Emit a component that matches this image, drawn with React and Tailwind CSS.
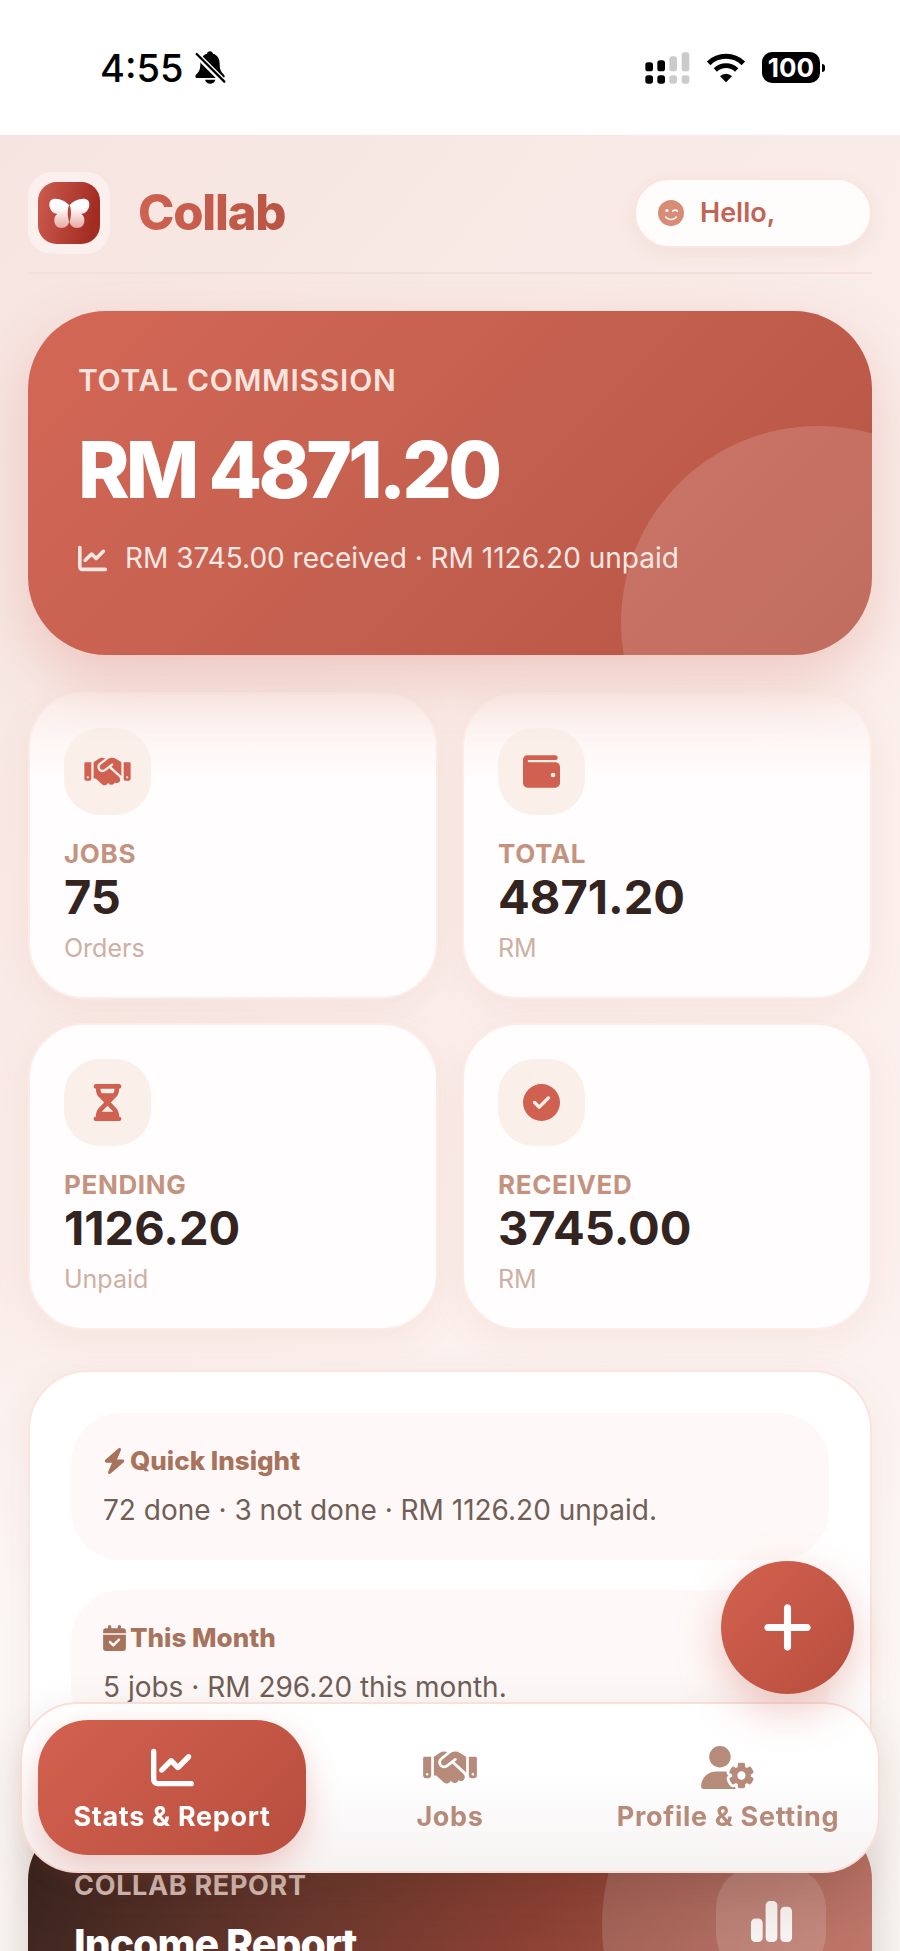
import { useState } from 'react';
import {
  FaBolt,
  FaCalendarCheck,
  FaChartLine,
  FaChartSimple,
  FaCircleCheck,
  FaFaceSmileWink,
  FaHandshake,
  FaHourglassHalf,
  FaPlus,
  FaUserGear,
  FaWallet
} from 'react-icons/fa6';

const stats = [
  { label: 'Jobs', value: '75', hint: 'Orders', icon: FaHandshake },
  { label: 'Total', value: '4871.20', hint: 'RM', icon: FaWallet },
  { label: 'Pending', value: '1126.20', hint: 'Unpaid', icon: FaHourglassHalf },
  { label: 'Received', value: '3745.00', hint: 'RM', icon: FaCircleCheck }
];

const insights = [
  { title: 'Quick Insight', text: '72 done · 3 not done · RM 1126.20 unpaid.', icon: FaBolt },
  { title: 'This Month', text: '5 jobs · RM 296.20 this month.', icon: FaCalendarCheck }
];

const tabs = [
  { id: 'stats', label: 'Stats & Report', icon: FaChartLine },
  { id: 'jobs', label: 'Jobs', icon: FaHandshake },
  { id: 'profile', label: 'Profile & Setting', icon: FaUserGear }
];

const StatusBar = () => (
  <div className="flex h-[135px] shrink-0 items-center justify-between bg-white pr-[75px] pl-[100px] text-black">
    <div className="flex items-center gap-3">
      <span className="text-[38px] leading-none font-medium">4:55</span>
      <svg className="h-[33px] w-[31px]" viewBox="0 0 93 99" aria-hidden="true">
        <path
          d="M45 1c-5 0-8 3-9 7-14 4-20 16-20 30 0 18-4 24-11 31-6 6-5 12 2 12h76c7 0 8-6 2-12-7-7-11-13-11-31 0-14-6-26-20-30-1-4-4-7-9-7Z"
          fill="currentColor"
        />
        <path d="M30 86h31c-2 8-8 12-15.500 12S32 94 30 86Z" fill="currentColor" />
        <path d="M0 6 88 94" stroke="#fff" strokeWidth="18" />
        <path d="M5 9 88 92" stroke="currentColor" strokeWidth="7" strokeLinecap="round" />
      </svg>
    </div>
    <div className="flex items-center">
      <svg className="h-8 w-[45px]" viewBox="0 0 135 96" aria-hidden="true">
        <rect x="1" y="31" width="23" height="27" rx="8" />
        <rect x="37" y="25" width="23" height="33" rx="8" />
        <rect x="73" y="13" width="23" height="45" rx="8" fill="#cbcbcb" />
        <rect x="110" y="1" width="23" height="57" rx="8" fill="#cbcbcb" />
        <rect x="1" y="70" width="23" height="25" rx="8" />
        <rect x="37" y="70" width="23" height="25" rx="8" />
        <rect x="73" y="70" width="23" height="25" rx="8" fill="#cbcbcb" />
        <rect x="110" y="70" width="23" height="25" rx="8" fill="#cbcbcb" />
      </svg>
      <svg className="ml-4 h-[30px] w-10" viewBox="0 0 120 90" aria-hidden="true">
        <path d="M8 31a75 75 0 0 1 104 0" fill="none" stroke="#000" strokeWidth="15" />
        <path d="M28 51a46 46 0 0 1 64 0" fill="none" stroke="#000" strokeWidth="14" />
        <path d="M42 70a25 25 0 0 1 36 0L60 88Z" />
      </svg>
      <span className="ml-4 flex h-[31px] w-[58px] items-center justify-center rounded-[10px] bg-black text-[26px] leading-none font-bold text-white">
        100
      </span>
      <span className="ml-0.5 h-2 w-[3px] rounded-r-full bg-black" />
    </div>
  </div>
);

const Logo = () => (
  <div className="rounded-3xl bg-[#fcf0ee] p-[10px]">
    <svg className="size-[62px]" viewBox="0 0 186 186" aria-hidden="true">
      <defs>
        <linearGradient id="logo-bg" x1="0" y1="0" x2="1" y2="0.2">
          <stop offset="0" stopColor="#cc5b50" />
          <stop offset="1" stopColor="#a32c22" />
        </linearGradient>
        <linearGradient id="logo-wing" x1="0" y1="50" x2="0" y2="138" gradientUnits="userSpaceOnUse">
          <stop offset="0.3" stopColor="#fff" />
          <stop offset="1" stopColor="#e9a9a4" />
        </linearGradient>
      </defs>
      <rect width="186" height="186" rx="56" fill="url(#logo-bg)" />
      <g fill="url(#logo-wing)">
        <path d="M94 70C86 60 68 50 52 50c-12 0-18 7-18 16 0 16 9 28 24 30-7 4-10 12-9 22 1 13 10 20 21 20 13 0 24-9 24-24Z" />
        <path d="M94 70c8-10 26-20 42-20 12 0 18 7 18 16 0 16-9 28-24 30 7 4 10 12 9 22-1 13-10 20-21 20-13 0-24-9-24-24Z" />
      </g>
      <path d="M94 68c6 10 7 36 0 52-7-16-6-42 0-52Z" fill="#b7453b" />
    </svg>
  </div>
);

const StatCard = ({ label, value, hint, icon: Icon, tinted }) => (
  <div
    className={`rounded-[56px] border-2 border-[#fbece7] p-[34px] shadow-[0_10px_36px_rgba(207,98,80,0.08)] ${
      tinted ? 'bg-linear-to-b from-[#fbeeeb] to-[#fffdfd] to-28%' : 'bg-[#fffdfd]'
    }`}
  >
    <div className="flex size-[87px] items-center justify-center rounded-[36px] bg-[#faefe9] text-[#d06150]">
      <Icon className="h-[37px] w-[47px]" />
    </div>
    <div className="mt-6 text-[26px] leading-[30px] font-bold tracking-wide text-[#c4937f] uppercase">{label}</div>
    <div className="mt-1 text-[47px] leading-[48px] font-bold text-[#33241f]">{value}</div>
    <div className="mt-3 text-[25px] leading-[30px] text-[#cdb0a3]">{hint}</div>
  </div>
);

const App = () => {
  const [activeTab, setActiveTab] = useState('stats');

  return (
    <div className="flex h-dvh flex-col overflow-hidden bg-white font-['Inter','Liberation_Sans',sans-serif]">
      <StatusBar />

      <main className="flex-1 overflow-y-auto bg-[linear-gradient(130deg,#f6e4e0_0%,#f8e9e5_22%,#fbefec_60%,#fcf2ef_100%)] [scrollbar-width:none]">
        <div className="bg-linear-to-b from-transparent from-60% to-[#fdf8f5] to-80% px-7">
          <header className="flex items-center justify-between border-b-2 border-[#f4e0da] pt-[37px] pb-[18px]">
            <div className="flex items-center gap-7">
              <Logo />
              <h1 className="bg-linear-to-r from-[#cf6250] to-[#b95445] bg-clip-text text-[49px] leading-[60px] font-extrabold tracking-tight text-transparent">
                Collab
              </h1>
            </div>
            <button
              type="button"
              className="flex h-[70px] w-[238px] items-center gap-4 rounded-full border-2 border-[#fae5df] bg-[#fffcfc] px-[22px] text-[27px] font-semibold text-[#c06454] shadow-[0_6px_20px_rgba(120,60,40,0.06)]"
            >
              <FaFaceSmileWink className="size-[26px] text-[#d88b75]" />
              Hello,
            </button>
          </header>

          <section className="relative mt-[37px] h-[344px] overflow-hidden rounded-[78px] bg-linear-135 from-[#d46756] via-[#c4604f] to-[#b65343] shadow-[0_24px_60px_rgba(207,98,80,0.26)]">
            <div className="absolute -right-[143px] -bottom-[165px] size-[394px] rounded-full bg-white/15" />
            <div className="relative px-[50px] pt-[51px]">
              <h2 className="text-[30px] leading-9 font-semibold tracking-wide text-[#fce4de] uppercase">Total Commission</h2>
              <p className="mt-6 text-[78px] leading-[96px] font-extrabold tracking-tighter text-white">RM 4871.20</p>
              <p className="mt-[22px] flex items-center gap-[18px] text-[28px] leading-9 text-[#fce8e3]">
                <FaChartLine className="size-[29px]" />
                RM 3745.00 received · RM 1126.20 unpaid
              </p>
            </div>
          </section>

          <section className="mt-[37px] grid grid-cols-2 gap-6">
            {stats.map((stat, i) => (
              <StatCard key={stat.label} {...stat} tinted={i < 2} />
            ))}
          </section>

          <section className="mt-10 flex flex-col gap-[30px] rounded-[60px] border-2 border-[#fbe5de] bg-white p-[41px] shadow-[0_10px_40px_rgba(120,60,40,0.07)]">
            {insights.map(({ title, text, icon: Icon }) => (
              <div key={title} className="rounded-[50px] bg-[#fef9f8] p-8">
                <h3 className="flex items-center gap-1 text-[26px] leading-8 font-extrabold text-[#a8735d]">
                  <Icon className="h-[26px] w-[23px]" />
                  {title}
                </h3>
                <p className="mt-[15px] text-[28px] leading-9 text-[#715f57]">{text}</p>
              </div>
            ))}
          </section>

          <section className="relative mt-10 overflow-hidden rounded-[60px] bg-[linear-gradient(120deg,#34231d_0%,#6a382d_35%,#8a4033_58%,#b86353_100%)] p-[46px] shadow-[0_20px_50px_rgba(50,30,20,0.2)]">
            <div className="absolute -top-[105px] -right-[150px] size-[420px] rounded-full bg-white/15" />
            <div className="relative flex items-start justify-between">
              <div className="pt-1">
                <p className="text-[27px] leading-8 font-bold tracking-wide text-[#d6c0ba] uppercase">Collab Report</p>
                <h2 className="mt-4 text-[41px] leading-[52px] font-extrabold tracking-tight text-white">Income Report</h2>
              </div>
              <div className="flex size-[110px] items-center justify-center rounded-[42px] bg-white/15 text-[#f7f3f2]">
                <FaChartSimple className="size-[47px]" />
              </div>
            </div>
          </section>
        </div>
      </main>

      <nav className="fixed inset-x-5 bottom-[78px] z-10 grid grid-cols-3 gap-[10px] rounded-[58px] border-2 border-[#fadfd9] bg-linear-to-b from-white from-40% to-[#f6f2f2] p-4 shadow-[0_20px_50px_rgba(60,30,20,0.16)]">
        {tabs.map(({ id, label, icon: Icon }) => (
          <button
            key={id}
            type="button"
            onClick={() => setActiveTab(id)}
            className={`flex h-[135px] flex-col items-center justify-center gap-3 rounded-[50px] pt-1 text-[27px] leading-8 font-bold tracking-wide whitespace-nowrap ${
              activeTab === id
                ? 'bg-linear-135 from-[#d3614f] to-[#b84e3e] text-white shadow-[0_12px_32px_rgba(207,98,80,0.3)]'
                : 'text-[#b68b79]'
            }`}
          >
            <Icon className={id === 'stats' ? 'size-[43px]' : 'h-[43px] w-[54px]'} />
            {label}
          </button>
        ))}
      </nav>

      <button
        type="button"
        aria-label="Add job"
        className="fixed right-[46px] bottom-[257px] z-20 flex size-[133px] items-center justify-center rounded-full bg-linear-135 from-[#d3614f] to-[#b84e3e] text-white shadow-[0_16px_44px_rgba(207,98,80,0.35)]"
      >
        <FaPlus className="size-[57px]" />
      </button>
    </div>
  );
};

export default App;
